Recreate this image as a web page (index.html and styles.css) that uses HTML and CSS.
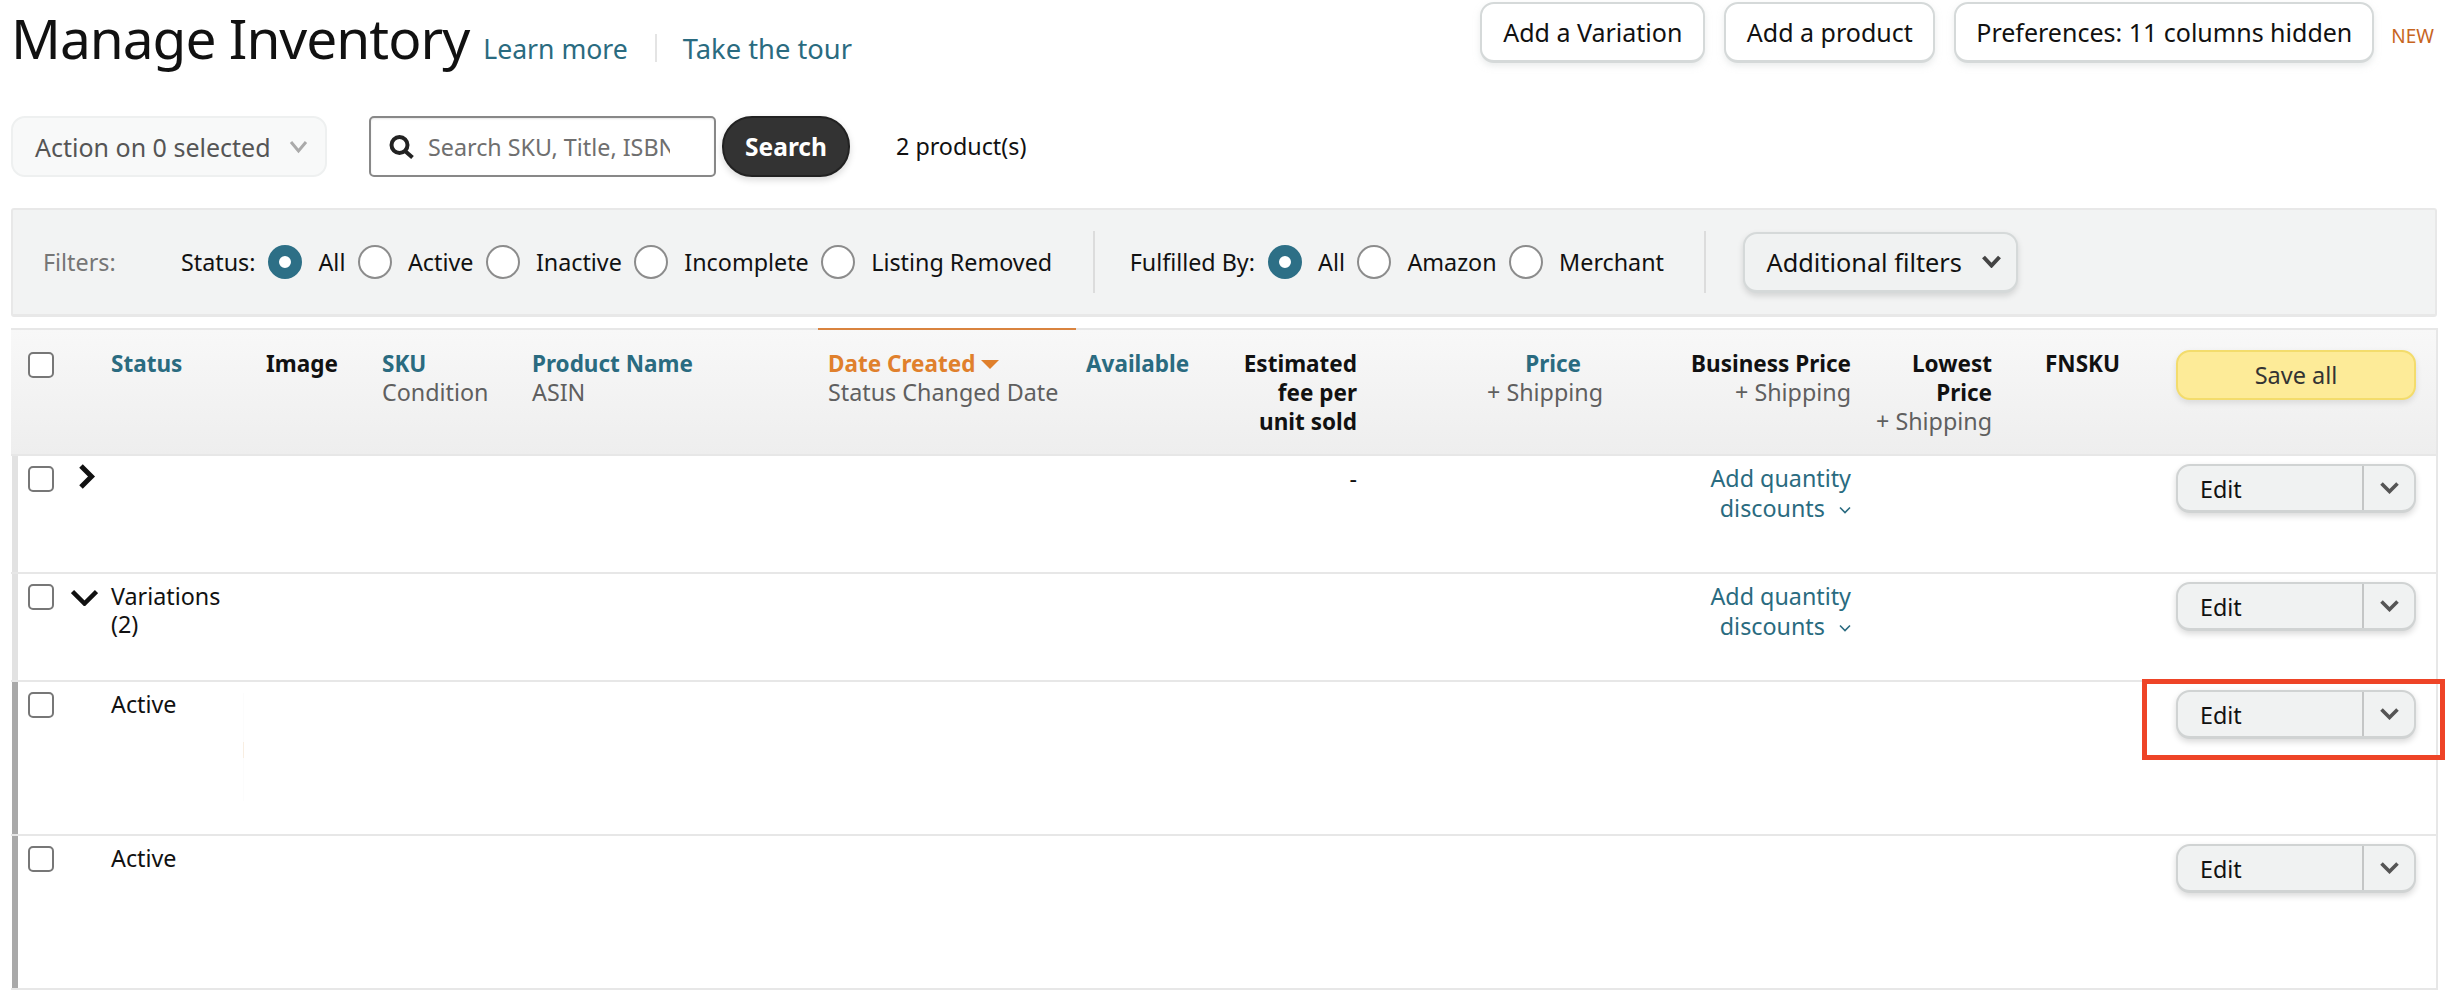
FILE: index.html
```html
<!DOCTYPE html>
<html lang="en">
<head>
<meta charset="utf-8">
<title>Manage Inventory</title>
<link rel="stylesheet" href="styles.css">
</head>
<body>
<main class="page">
  <header class="top">
    <div class="title-group">
      <h1>Manage Inventory</h1>
      <a class="top-link">Learn more</a>
      <span class="top-sep"></span>
      <a class="top-link top-link-tour">Take the tour</a>
    </div>
    <div class="top-actions">
      <button class="btn btn-add-var">Add a Variation</button>
      <button class="btn btn-add-prod">Add a product</button>
      <button class="btn btn-prefs">Preferences: 11 columns hidden</button>
      <span class="new-tag">NEW</span>
    </div>
  </header>

  <section class="toolbar">
    <button class="action-select">Action on 0 selected
      <svg class="action-chev" viewBox="0 0 19 14"><path d="M2 2l7.5 9L17 2" /></svg>
    </button>
    <label class="search-box">
      <svg class="search-icon" viewBox="0 0 26 24"><circle cx="10.5" cy="10" r="8" /><path d="M16 16l7.5 6.5" /></svg>
      <input class="search-input" type="text" placeholder="Search SKU, Title, ISBN, ASIN">
    </label>
    <button class="search-btn">Search</button>
    <span class="count">2 product(s)</span>
  </section>

  <section class="filters">
    <span class="filters-label">Filters:</span>
    <span class="f-title f-status">Status:</span>
    <span class="radio on"></span><span class="f-opt">All</span>
    <span class="radio"></span><span class="f-opt">Active</span>
    <span class="radio"></span><span class="f-opt">Inactive</span>
    <span class="radio"></span><span class="f-opt">Incomplete</span>
    <span class="radio"></span><span class="f-opt">Listing Removed</span>
    <span class="f-div"></span>
    <span class="f-title">Fulfilled By:</span>
    <span class="radio on"></span><span class="f-opt">All</span>
    <span class="radio"></span><span class="f-opt">Amazon</span>
    <span class="radio"></span><span class="f-opt">Merchant</span>
    <span class="f-div f-div2"></span>
    <button class="btn-more">Additional filters
      <svg class="more-chev" viewBox="0 0 21 13"><path d="M2.5 2l8 8.5 8-8.5" /></svg>
    </button>
  </section>

  <section class="table">
    <div class="grid head">
      <div class="cell c-check"><span class="check"></span></div>
      <div class="cell"><a class="sort">Status</a></div>
      <div class="cell"><b>Image</b></div>
      <div class="cell"><a class="sort">SKU</a><br><span class="sub">Condition</span></div>
      <div class="cell"><a class="sort">Product Name</a><br><span class="sub">ASIN</span></div>
      <div class="cell c-date"><a class="sort-active">Date Created <svg class="sort-caret" viewBox="0 0 18 9"><path d="M0 0h18L9 9z" /></svg></a><br><span class="sub">Status Changed Date</span></div>
      <div class="cell"><a class="sort">Available</a></div>
      <div class="cell right"><b>Estimated<br>fee per<br>unit sold</b></div>
      <div class="cell right"><a class="sort price">Price</a><br><span class="sub">+ Shipping</span></div>
      <div class="cell right"><b>Business Price</b><br><span class="sub">+ Shipping</span></div>
      <div class="cell right"><b>Lowest<br>Price</b><br><span class="sub">+ Shipping</span></div>
      <div class="cell c-fnsku"><b>FNSKU</b></div>
      <div class="cell c-act"><button class="save-btn">Save all</button></div>
    </div>

    <div class="grid row row-a parent">
      <div class="cell c-check"><span class="check"></span>
        <svg class="expand-r" viewBox="0 0 19 25"><path d="M4 2l10.5 10.5L4 23" /></svg></div>
      <div class="cell"></div><div class="cell"></div><div class="cell"></div><div class="cell"></div><div class="cell"></div><div class="cell"></div>
      <div class="cell right">-</div>
      <div class="cell"></div>
      <div class="cell right qty"><a>Add quantity<br>discounts <svg class="qty-chev" viewBox="0 0 12 8"><path d="M1 1.5l5 5 5-5" /></svg></a></div>
      <div class="cell"></div><div class="cell"></div>
      <div class="cell c-act"><div class="split"><span class="split-main">Edit</span><span class="split-arrow"><svg class="split-chev" viewBox="0 0 19 12"><path d="M1.5 1.5l8 8 8-8" /></svg></span></div></div>
    </div>

    <div class="grid row row-b parent">
      <div class="cell c-check"><span class="check"></span>
        <svg class="expand-d" viewBox="0 0 27 17"><path d="M1.5 2.5l12 12 12-12" /></svg></div>
      <div class="cell">Variations<br>(2)</div>
      <div class="cell"></div><div class="cell"></div><div class="cell"></div><div class="cell"></div><div class="cell"></div><div class="cell"></div><div class="cell"></div>
      <div class="cell right qty"><a>Add quantity<br>discounts <svg class="qty-chev" viewBox="0 0 12 8"><path d="M1 1.5l5 5 5-5" /></svg></a></div>
      <div class="cell"></div><div class="cell"></div>
      <div class="cell c-act"><div class="split"><span class="split-main">Edit</span><span class="split-arrow"><svg class="split-chev" viewBox="0 0 19 12"><path d="M1.5 1.5l8 8 8-8" /></svg></span></div></div>
    </div>

    <div class="grid row row-c child">
      <div class="cell c-check"><span class="check"></span></div>
      <div class="cell">Active</div>
      <div class="cell"><span class="trace"></span></div><div class="cell"></div><div class="cell"></div><div class="cell"></div><div class="cell"></div><div class="cell"></div><div class="cell"></div><div class="cell"></div><div class="cell"></div><div class="cell"></div>
      <div class="cell c-act"><div class="split"><span class="split-main">Edit</span><span class="split-arrow"><svg class="split-chev" viewBox="0 0 19 12"><path d="M1.5 1.5l8 8 8-8" /></svg></span></div><span class="highlight"></span></div>
    </div>

    <div class="grid row row-c child">
      <div class="cell c-check"><span class="check"></span></div>
      <div class="cell">Active</div>
      <div class="cell"></div><div class="cell"></div><div class="cell"></div><div class="cell"></div><div class="cell"></div><div class="cell"></div><div class="cell"></div><div class="cell"></div><div class="cell"></div><div class="cell"></div>
      <div class="cell c-act"><div class="split"><span class="split-main">Edit</span><span class="split-arrow"><svg class="split-chev" viewBox="0 0 19 12"><path d="M1.5 1.5l8 8 8-8" /></svg></span></div></div>
    </div>
  </section>
</main>
</body>
</html>
```

FILE: styles.css
```css
* { box-sizing: border-box; }
html, body { margin: 0; background: #fff; }
body { font-family: "Noto Sans", "Open Sans", sans-serif; font-size: 23.3px; line-height: 28px; color: #111; overflow: hidden; }
button, input { font: inherit; color: inherit; }
svg { fill: none; display: block; }
.page { width: 2460px; padding: 0 23px 0 11px; }

.top { height: 116px; display: flex; justify-content: space-between; align-items: flex-start; }
.title-group { display: flex; align-items: baseline; }
h1 { margin: 0; font-size: 55px; font-weight: 400; line-height: 76px; letter-spacing: -1px; }
.top-link { font-size: 26.6px; line-height: 36px; color: #2a6b80; }
.top-link-tour { font-size: 27.3px; }
.title-group h1 { margin-right: 14px; }
.top-sep { width: 2px; height: 28px; margin: 34px 26px 0 27px; background: #e4e4e4; align-self: flex-start; }
.top-actions { display: flex; align-items: flex-start; gap: 19px; padding-top: 2px; position: relative; }
.btn { height: 61px; padding: 0; background: #fff; border: 2px solid #d5d9d9; border-bottom-width: 3px; border-radius: 14px; box-shadow: 0 3px 6px rgba(213,217,217,.5); font-size: 25px; white-space: nowrap; }
.btn-add-var { width: 225px; }
.btn-add-prod { width: 211px; }
.btn-prefs { width: 420px; }
.new-tag { margin: 23px 3px 0 -2px; font-size: 19px; line-height: 22px; color: #c7651e; }

.toolbar { display: flex; align-items: center; height: 61px; }
.action-select { width: 316px; height: 61px; display: flex; align-items: center; justify-content: space-between; padding: 0 17px 0 22px; background: #f8f9f9; border: 2px solid #eef0f0; border-radius: 14px; color: #555; font-size: 25px; white-space: nowrap; }
.action-chev { width: 19px; height: 14px; }
.action-chev path { stroke: #aaa; stroke-width: 3; }
.search-box { width: 347px; height: 61px; margin-left: 42px; display: flex; align-items: center; padding: 0 44px 0 18px; background: #fff; border: 2px solid #888; border-radius: 5px; box-shadow: inset 0 1px 2px rgba(0,0,0,.1); }
.search-icon { width: 26px; height: 24px; flex: none; }
.search-icon circle, .search-icon path { stroke: #222; stroke-width: 4; }
.search-input { flex: 1; min-width: 0; margin-left: 13px; padding: 0; border: 0; outline: 0; background: transparent; font-size: 23.3px; }
.search-input::placeholder { color: #6f6f6f; opacity: 1; }
.search-btn { width: 128px; height: 61px; margin-left: 6px; padding: 0; background: #333; border: 2px solid #222; border-radius: 30px; box-shadow: 0 3px 7px rgba(0,0,0,.15); color: #fff; font-size: 24.5px; font-weight: 700; }
.count { margin-left: 46px; position: relative; top: -1px; }

.filters { height: 109px; margin-top: 31px; display: flex; align-items: center; padding-left: 30px; background: #f2f3f3; border: 2px solid #e8e8e8; border-bottom-width: 3px; border-radius: 3px; }
.filters-label { color: #767676; width: 138px; flex: none; }
.f-title { margin-right: 13px; white-space: nowrap; }
.f-opt { margin: 0 12.5px 0 16px; white-space: nowrap; }
.radio { width: 34px; height: 34px; flex: none; background: #fff; border: 2px solid #8c8c8c; border-radius: 50%; }
.radio.on { border: 11px solid #2d6f86; }
.f-div { width: 2px; height: 62px; margin: 0 35px 0 28px; background: #dcdcdc; flex: none; }
.f-div2 { margin: 0 37px 0 27px; }
.btn-more { width: 275px; height: 61px; display: flex; align-items: center; justify-content: space-between; padding: 0 14px 0 22px; background: #f0f2f2; border: 2px solid #d5d9d9; border-bottom-width: 3px; border-radius: 14px; box-shadow: 0 3px 6px rgba(0,0,0,.13); font-size: 25.3px; white-space: nowrap; }
.more-chev { width: 21px; height: 13px; }
.more-chev path { stroke: #444; stroke-width: 4; }

.table { margin-top: 11px; width: 2427px; border-right: 2px solid #e7e7e7; }
.grid { display: grid; grid-template-columns: 90px 155px 116px 150px 296px 258px 134px 157px 246px 248px 141px 164px 1fr; border-bottom: 2px solid #e7e7e7; }
.cell { padding: 7.5px 10px 0; min-width: 0; }
.right { text-align: right; }
.head { height: 128px; border-top: 2px solid #e7e7e7; background: linear-gradient(#f8f8f8, #eeeeee); }
.head .cell { padding-top: 19px; }
.head b { font-weight: 700; font-size: 22.5px; }
.sort { color: #2a6b80; font-weight: 700; font-size: 22.5px; }
.sub { color: #5f5f5f; }
.sort-active { color: #e0802c; font-weight: 700; font-size: 22.5px; display: inline-flex; align-items: center; gap: 6px; }
.sort-caret { width: 18px; height: 9px; }
.sort-caret path { fill: #e0802c; }
.c-date { position: relative; }
.c-date::before { content: ""; position: absolute; left: 0; right: 0; top: -2px; height: 2px; background: #d9833f; }
.c-fnsku { padding-left: 43px; }
.price { padding-right: 22px; }
.head .c-act { padding: 20px 10px 0; }

.c-check { position: relative; padding: 10px 0 0 17px; }
.head .c-check { padding: 22px 0 0 17px; }
.check { display: block; width: 26px; height: 26px; background: #fff; border: 2px solid #777; border-radius: 5px; }
.expand-r { position: absolute; left: 66px; top: 8px; width: 19px; height: 25px; }
.expand-r path { stroke: #111; stroke-width: 5; }
.expand-d { position: absolute; left: 60px; top: 15px; width: 27px; height: 17px; }
.expand-d path { stroke: #111; stroke-width: 4.5; }

.row { position: relative; }
.row::before { content: ""; position: absolute; left: 1px; top: 0; bottom: 0; width: 6px; }
.parent::before { background: #e2e2e2; }
.child::before { background: #a9a9a9; }
.row-a { height: 118px; }
.row-b { height: 108px; }
.row-c { height: 154px; }
.qty { line-height: 30px; padding-top: 6.5px; }
.qty a { color: #2a6b80; }
.qty-chev { display: inline-block; width: 12px; height: 8px; margin-left: 8px; vertical-align: 3px; }
.qty-chev path { stroke: #2a6b80; stroke-width: 1.6; }
.trace { position: absolute; left: 232px; top: 11px; width: 1px; height: 108px; background: linear-gradient(#fcfcfc 45%, #f8eee2 45%, #f8eee2 60%, #fcfcfc 60%); }

.c-act { position: relative; padding: 8px 10px 0; }
.save-btn { width: 240px; height: 50px; padding: 0; background: #fdeb98; border: 2px solid #f3dc6c; border-radius: 14px; box-shadow: 0 3px 6px rgba(0,0,0,.1); font-size: 23.5px; color: #333; }
.split { display: flex; width: 240px; height: 49px; background: #f0f2f2; border: 2px solid #d0d3d3; border-bottom-width: 3px; border-radius: 14px; box-shadow: 0 3px 6px rgba(0,0,0,.15); }
.split-main { flex: 1; padding: 0 0 0 22px; line-height: 46px; }
.split-arrow { width: 52px; display: flex; align-items: center; justify-content: center; border-left: 2px solid #c4c6c6; }
.split-chev { width: 19px; height: 12px; }
.split-chev path { stroke: #555; stroke-width: 3.6; }
.highlight { position: absolute; left: -24px; top: -3px; width: 303px; height: 81px; border: 5px solid #ee4427; }
```
